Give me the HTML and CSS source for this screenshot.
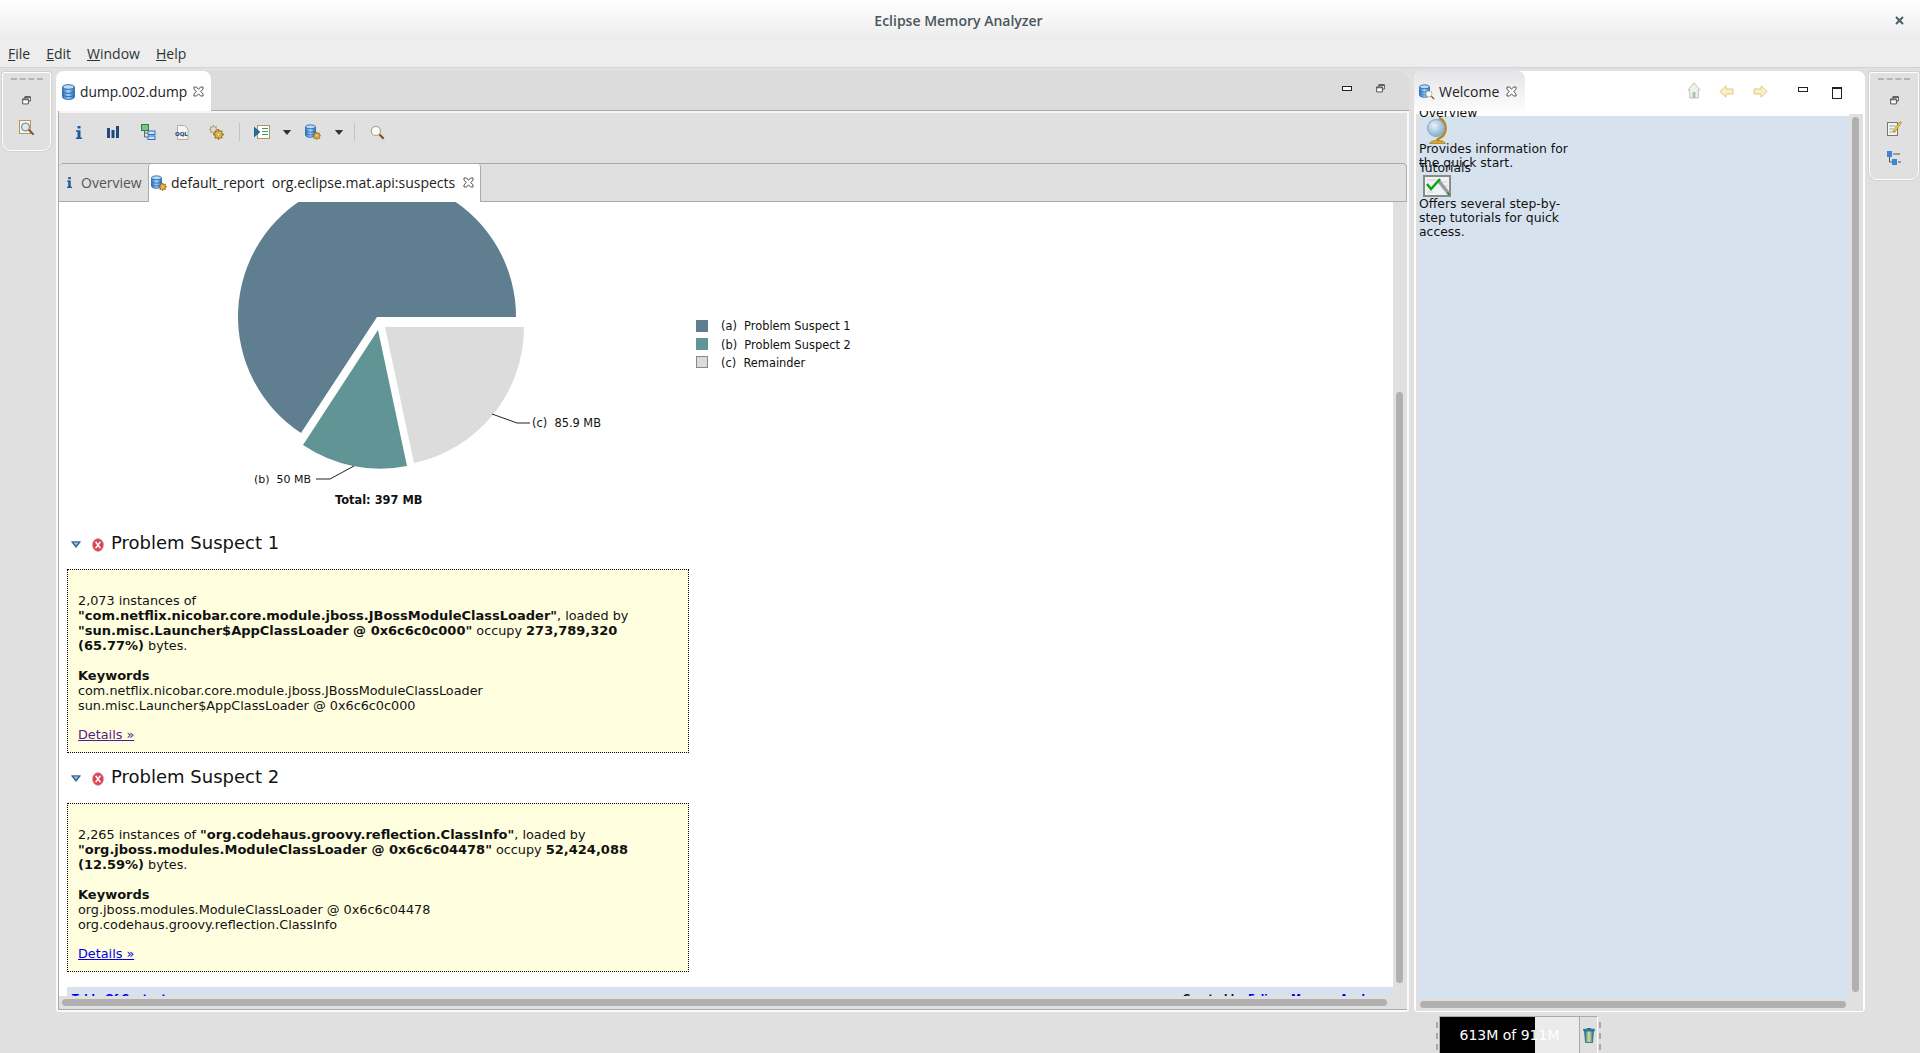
FILE: index.html
```html
<!DOCTYPE html>
<html lang="en">
<head>
  <meta charset="UTF-8">
  <title>Eclipse Memory Analyzer</title>
  <link rel="stylesheet" href="styles.css">
</head>
<body>

<svg class="defs" width="0" height="0">
  <defs>
    <linearGradient id="dbBlue" x1="0" x2="1" y1="0" y2="0">
      <stop offset="0" stop-color="#2f7fd0"/>
      <stop offset="0.5" stop-color="#a9d0f0"/>
      <stop offset="1" stop-color="#2a70c0"/>
    </linearGradient>
    <linearGradient id="trashFill" x1="0" x2="1" y1="0" y2="0">
      <stop offset="0" stop-color="#1f6d9c"/>
      <stop offset="0.5" stop-color="#dfe08a"/>
      <stop offset="1" stop-color="#1f6d9c"/>
    </linearGradient>
    <radialGradient id="globeFill" cx="0.4" cy="0.35" r="0.7">
      <stop offset="0" stop-color="#e8f2fa"/>
      <stop offset="1" stop-color="#7fa9cf"/>
    </radialGradient>
    <symbol id="close" viewBox="0 0 11 11">
      <path d="M1 1h2.500l2 2.300 2-2.300H10v2.300L7.600 5.500 10 7.800V10H7.500l-2-2.200-2 2.200H1V7.800l2.400-2.300L1 3.300z" fill="#fff" stroke="#555" stroke-width="1"/>
    </symbol>
    <symbol id="db" viewBox="0 0 13 16">
      <path d="M.7 3v10c0 1.400 2.600 2.400 5.800 2.400s5.800-1 5.800-2.400V3z" fill="url(#dbBlue)" stroke="#2467ad"/>
      <ellipse cx="6.500" cy="3" rx="5.800" ry="2.300" fill="#bcdcf5" stroke="#2467ad"/>
      <path d="M.7 7c0 1.400 2.600 2.400 5.800 2.400s5.800-1 5.800-2.400M.7 10.200c0 1.400 2.600 2.400 5.800 2.400s5.800-1 5.800-2.400" fill="none" stroke="#2467ad"/>
    </symbol>
    <symbol id="gear" viewBox="0 0 10 10">
      <circle cx="5" cy="5" r="3.400" fill="#eebd45" stroke="#9a7424" stroke-width="1"/>
      <path d="M5 0v2M5 8v2M0 5h2M8 5h2M1.500 1.500l1.300 1.300M7.200 7.200l1.300 1.300M1.500 8.500l1.300-1.300M7.200 2.800l1.300-1.300" stroke="#9a7424" stroke-width="1.200"/>
      <circle cx="5" cy="5" r="1.300" fill="#fff6d0" stroke="#9a7424" stroke-width=".6"/>
    </symbol>
    <symbol id="gearPale" viewBox="0 0 10 10">
      <circle cx="5" cy="5" r="3.400" fill="#e6dcc4" stroke="#a99a78" stroke-width="1"/>
      <path d="M5 0v2M5 8v2M0 5h2M8 5h2M1.500 1.500l1.300 1.300M7.200 7.200l1.300 1.300M1.500 8.500l1.300-1.300M7.200 2.800l1.300-1.300" stroke="#a99a78" stroke-width="1.200"/>
    </symbol>
    <symbol id="restore" viewBox="0 0 11 11">
      <path d="M3.500 3V.8h6.700v5.400H8M.8 3.500h7v6.200H.8z" fill="#fff" stroke="#333"/>
      <path d="M3.500 1.700h6.700M.8 4.600h7" stroke="#333"/>
    </symbol>
    <symbol id="err" viewBox="0 0 12 14">
      <ellipse cx="6" cy="7" rx="5.600" ry="6.400" fill="#e0404f" stroke="#c9b4b4" stroke-width=".6"/>
      <path d="M3.600 3.800l4.800 6.400M8.400 3.800l-4.800 6.400" stroke="#fff" stroke-width="1.500"/>
    </symbol>
    <symbol id="twistie" viewBox="0 0 10 7">
      <path d="M.5.7h9L5 6.500z" fill="#2c6aa5" stroke="#1d3f66" stroke-width=".6"/>
      <path d="M2.500 1.600h5L5 4.600z" fill="#9cc3e6"/>
    </symbol>
    <symbol id="caret" viewBox="0 0 10 6">
      <path d="M0 0h10L5 6z" fill="#333"/>
    </symbol>
    <symbol id="lens" viewBox="0 0 16 16">
      <path d="M9.600 9.600l5 5" stroke="#7a4b2a" stroke-width="2.200"/>
      <circle cx="6.300" cy="6.300" r="4.900" fill="#fbfbf2" stroke="#a8a699" stroke-width="1.300"/>
    </symbol>
  </defs>
</svg>

<div class="titlebar">
  <span class="title">Eclipse Memory Analyzer</span>
  <svg class="win-close" width="9" height="9" viewBox="0 0 9 9"><path d="M1 1l7 7M8 1L1 8" stroke="#4f5f66" stroke-width="2"/></svg>
</div>

<div class="menubar">
  <span class="menu"><u>F</u>ile</span>
  <span class="menu"><u>E</u>dit</span>
  <span class="menu"><u>W</u>indow</span>
  <span class="menu"><u>H</u>elp</span>
</div>

<div class="workbench">

  <!-- left trim -->
  <div class="trim trim-left">
    <div class="grip"></div>
    <svg class="trim-icon" width="9" height="9"><use href="#restore"/></svg>
    <svg class="trim-icon" width="16" height="16" viewBox="0 0 16 16">
      <rect x=".5" y=".5" width="11" height="13" fill="#f4f4f0" stroke="#b09a60"/>
      <path d="M9.600 9.600l5 5" stroke="#7a4b2a" stroke-width="2"/>
      <circle cx="6.500" cy="7" r="4" fill="#dbe8f2" stroke="#777"/>
    </svg>
  </div>

  <!-- editor stack -->
  <div class="editor-stack">
    <div class="stack-head">
      <div class="main-tab">
        <svg width="13" height="16"><use href="#db"/></svg>
        <span>dump.002.dump</span>
        <svg class="tab-close" width="11" height="11"><use href="#close"/></svg>
      </div>
      <div class="stack-buttons">
        <span class="btn-min"></span>
        <svg width="9" height="9"><use href="#restore"/></svg>
      </div>
    </div>

    <div class="editor-body">
      <div class="toolbar">
        <svg class="tool tool-info" width="6" height="13" viewBox="0 0 6 13"><path d="M1.500 0h3v2.600h-3zM0 4.200h4.500v7.300H6V13H0v-1.500h1.500V5.700H0z" fill="#1f5a9c"/></svg>
        <svg class="tool tool-bars" width="12" height="12" viewBox="0 0 12 12"><path d="M0 2h3v10H0zM4.500 4h3v8h-3zM9 0h3v12H9z" fill="#1f4a80"/></svg>
        <svg class="tool tool-tree" width="15" height="16" viewBox="0 0 15 16">
          <rect x=".5" y=".5" width="7" height="6" fill="#7cc47c" stroke="#2e7d4f"/>
          <path d="M3.500 6.500v6.500h3M3.500 9h3" fill="none" stroke="#666"/>
          <rect x="7" y="7" width="7" height="3.500" fill="#cfe2f5" stroke="#2a70c0"/>
          <rect x="7" y="12" width="7" height="3.500" fill="#cfe2f5" stroke="#2a70c0"/>
        </svg>
        <svg class="tool tool-oql" width="14" height="15" viewBox="0 0 14 15">
          <path d="M2.500.5h7l3.500 3.500v10.500h-10.500z" fill="#f4f4f0" stroke="#b7b09a"/>
          <text x="0" y="11" class="oql-text">OQL</text>
        </svg>
        <svg class="tool tool-gears" width="15" height="15" viewBox="0 0 15 15">
          <use href="#gearPale" x="0" y="0" width="9" height="9"/>
          <use href="#gear" x="4" y="4" width="11" height="11"/>
        </svg>
        <span class="tool-sep sep-a"></span>
        <svg class="tool tool-run" width="16" height="14" viewBox="0 0 16 14">
          <rect x="3.500" y=".5" width="12" height="13" fill="#fff" stroke="#a89a60"/>
          <path d="M8 3.500h6M8 6.500h6M8 9.500h6" stroke="#3e9a6a"/>
          <path d="M0 2l6 5-6 5z" fill="#1f6fa8" stroke="#123f66" stroke-width=".5"/>
        </svg>
        <svg class="tool-caret caret-a" width="10" height="5"><use href="#caret"/></svg>
        <svg class="tool tool-dbrun" width="16" height="16" viewBox="0 0 16 16">
          <use href="#db" x="0" y="0" width="11" height="14"/>
          <use href="#gear" x="7.500" y="7.500" width="8.500" height="8.500"/>
        </svg>
        <svg class="tool-caret caret-b" width="10" height="5"><use href="#caret"/></svg>
        <span class="tool-sep sep-b"></span>
        <svg class="tool tool-find" width="15" height="15"><use href="#lens"/></svg>
      </div>

      <div class="inner-tabs">
        <div class="inner-tab">
          <svg width="5" height="11" viewBox="0 0 6 13"><path d="M1.500 0h3v2.600h-3zM0 4.200h4.500v7.300H6V13H0v-1.500h1.500V5.700H0z" fill="#1f5a9c"/></svg>
          <span>Overview</span>
        </div>
        <div class="inner-tab inner-active">
          <svg width="16" height="16" viewBox="0 0 16 16">
            <use href="#db" x="0" y="0" width="11" height="14"/>
            <use href="#gear" x="7.500" y="7.500" width="8.500" height="8.500"/>
          </svg>
          <span>default_report&nbsp; org.eclipse.mat.api:suspects</span>
          <svg class="tab-close" width="11" height="11"><use href="#close"/></svg>
        </div>
      </div>

      <div class="report-pane">
        <div class="report-row">
          <div class="report">
            <svg class="chart" width="800" height="317" viewBox="59 202 800 317">
              <path d="M377 317L516 317A139 139 0 1 0 301 433Z" fill="#5f7f91"/>
              <path d="M378 330L303 445A138 138 0 0 0 407 466Z" fill="#619595"/>
              <path d="M385 327L524 327A139 139 0 0 1 414 463Z" fill="#dcdcdc"/>
              <path d="M492 414L517 423H530M354 466L330 479H316" fill="none" stroke="#222"/>
              <text x="532" y="427">(c)&#160; 85.9 MB</text>
              <text x="254" y="483" class="chart-small">(b)&#160; 50 MB</text>
              <text x="335" y="504" class="chart-total">Total: 397 MB</text>
              <rect x="696" y="320" width="12" height="12" fill="#5f7f91"/>
              <rect x="696" y="338" width="12" height="12" fill="#619595"/>
              <rect x="696.500" y="356.500" width="11" height="11" fill="#dcdcdc" stroke="#888"/>
              <text x="721" y="330">(a)&#160; Problem Suspect 1</text>
              <text x="721" y="349">(b)&#160; Problem Suspect 2</text>
              <text x="721" y="367">(c)&#160; Remainder</text>
            </svg>

            <h2 class="suspect-head">
              <svg class="twistie" width="10" height="7"><use href="#twistie"/></svg>
              <svg class="err" width="12" height="14"><use href="#err"/></svg>
              Problem Suspect 1
            </h2>
            <div class="suspect-box">
              <p>2,073 instances of <b>"com.netflix.nicobar.core.module.jboss.JBossModuleClassLoader"</b>, loaded by <b>"sun.misc.Launcher$AppClassLoader @ 0x6c6c0c000"</b> occupy <b>273,789,320 (65.77%)</b> bytes.</p>
              <p class="keywords"><b>Keywords</b><br>com.netflix.nicobar.core.module.jboss.JBossModuleClassLoader<br>sun.misc.Launcher$AppClassLoader @ 0x6c6c0c000</p>
              <a class="details visited" href="#">Details »</a>
            </div>

            <h2 class="suspect-head">
              <svg class="twistie" width="10" height="7"><use href="#twistie"/></svg>
              <svg class="err" width="12" height="14"><use href="#err"/></svg>
              Problem Suspect 2
            </h2>
            <div class="suspect-box">
              <p>2,265 instances of <b>"org.codehaus.groovy.reflection.ClassInfo"</b>, loaded by <b>"org.jboss.modules.ModuleClassLoader @ 0x6c6c04478"</b> occupy <b>52,424,088 (12.59%)</b> bytes.</p>
              <p class="keywords"><b>Keywords</b><br>org.jboss.modules.ModuleClassLoader @ 0x6c6c04478<br>org.codehaus.groovy.reflection.ClassInfo</p>
              <a class="details" href="#">Details »</a>
            </div>

            <div class="report-foot">
              <a href="#">Table Of Contents</a>
              <span>Created by <a href="#">Eclipse Memory Analyzer</a></span>
            </div>
          </div>
          <div class="vtrack report-vtrack"><div class="vthumb"></div></div>
        </div>
        <div class="htrack"><div class="hthumb"></div></div>
      </div>
    </div>
  </div>

  <!-- welcome view -->
  <div class="welcome-stack">
    <div class="welcome-head">
      <div class="welcome-tab">
        <svg width="16" height="16" viewBox="0 0 16 16">
          <use href="#db" x="0" y="0" width="11" height="14"/>
          <use href="#lens" x="6" y="6" width="10" height="10"/>
        </svg>
        <span>Welcome</span>
        <svg class="tab-close" width="11" height="11"><use href="#close"/></svg>
      </div>
      <div class="welcome-tools">
        <svg class="wt-home" width="14" height="17" viewBox="0 0 14 17">
          <path d="M7 .8L13 8h-1.700v8H2.700V8H1z" fill="#eef2f4" stroke="#c7c2ae"/>
          <path d="M5.500 10h3v6h-3z" fill="#a9c8a0"/>
        </svg>
        <svg class="wt-back" width="15" height="13" viewBox="0 0 15 13"><path d="M7 .8L.8 6.500 7 12.200V9h7V4H7z" fill="#fbeec2" stroke="#dfc98a"/></svg>
        <svg class="wt-next" width="15" height="13" viewBox="0 0 15 13"><path d="M8 .8l6.200 5.700L8 12.200V9H1V4h7z" fill="#fbeec2" stroke="#dfc98a"/></svg>
        <span class="btn-min wt-min"></span>
        <span class="btn-max"></span>
      </div>
    </div>
    <div class="welcome-body">
      <div class="welcome-view">
        <div class="welcome-item">
          <div class="item-title">Overview</div>
          <svg class="item-icon globe" width="20" height="27" viewBox="0 0 20 27">
            <path d="M12 1c5 2 7 7 6.500 12-.5 4-3 7-7 8.500" fill="none" stroke="#b88a1e" stroke-width="2.500"/>
            <circle cx="9" cy="11" r="8.500" fill="url(#globeFill)" stroke="#8aa5bd"/>
            <path d="M11 21v3" stroke="#b88a1e" stroke-width="3"/>
            <path d="M2.500 26.500c1-2.500 4-3 8-3s7 .5 8 3z" fill="#d8a92e" stroke="#96701a" stroke-width=".6"/>
          </svg>
          <div class="item-desc">Provides information for the quick start.</div>
        </div>
        <div class="welcome-item">
          <div class="item-title">Tutorials</div>
          <svg class="item-icon check" width="28" height="22" viewBox="0 0 28 22">
            <rect x="1" y="1" width="26" height="20" fill="#eef3f4" stroke="#8a8a8a" stroke-width="2"/>
            <path d="M4 5h9M4 17h6M14 7h10M21 11h4" stroke="#c6d6e0"/>
            <path d="M15 5l11 14" stroke="#9a9ea3" stroke-width="3.500"/>
            <path d="M24.500 17.500l2 2.500" stroke="#2a8a3a" stroke-width="2"/>
            <path d="M4 9l4 5 9-10" fill="none" stroke="#16a016" stroke-width="2.500"/>
          </svg>
          <div class="item-desc">Offers several step-by-step tutorials for quick access.</div>
        </div>
      </div>
      <div class="vtrack welcome-vtrack"><div class="vthumb"></div></div>
    </div>
    <div class="htrack welcome-htrack"><div class="hthumb"></div></div>
  </div>

  <!-- right trim -->
  <div class="trim trim-right">
    <div class="grip"></div>
    <svg class="trim-icon" width="9" height="9"><use href="#restore"/></svg>
    <svg class="trim-icon" width="15" height="16" viewBox="0 0 15 16">
      <rect x=".5" y="2.500" width="10" height="13" fill="#f4f4ee" stroke="#777"/>
      <path d="M2.500 6h6M2.500 9h4M2.500 12h6" stroke="#999"/>
      <path d="M6 11l7-9.500 1.500 1L8 12z" fill="#f2d22e" stroke="#8a7420" stroke-width=".6"/>
    </svg>
    <svg class="trim-icon" width="14" height="15" viewBox="0 0 14 15">
      <rect x="0" y="0" width="5" height="6" fill="#3a86d8"/>
      <rect x="5" y="8" width="5" height="6" fill="#3a86d8"/>
      <path d="M2.500 6v5H5M6 3h7M11 11h3" fill="none" stroke="#555"/>
    </svg>
  </div>
</div>

<div class="statusbar">
  <span class="heap-grip"></span>
  <div class="heap">
    <div class="heap-gauge">
      <div class="heap-used"></div>
      <span class="heap-text">613M of 911M</span>
    </div>
    <div class="heap-gc">
      <svg width="12" height="16" viewBox="0 0 12 16">
        <path d="M4 1h4v1.500H4z" fill="#1f6d8c"/>
        <path d="M.5 2h11v2H.5z" fill="#2a86a8" stroke="#1f6d8c" stroke-width=".5"/>
        <path d="M1.500 4h9l-1 11.500h-7z" fill="url(#trashFill)" stroke="#1f6d8c" stroke-width=".8"/>
      </svg>
    </div>
  </div>
  <span class="heap-grip"></span>
</div>

</body>
</html>
```

FILE: styles.css
```css
* {
  box-sizing: border-box;
}

html, body {
  margin: 0;
  padding: 0;
  height: 100%;
}

body {
  width: 1920px;
  height: 1053px;
  overflow: hidden;
  display: flex;
  flex-direction: column;
  background: #e0e0e0;
  font-family: "Open Sans", sans-serif;
  font-size: 13px;
  color: #2e3436;
}

.defs {
  position: absolute;
}

/* window frame */

.titlebar {
  height: 40px;
  flex: none;
  position: relative;
  display: flex;
  align-items: center;
  justify-content: center;
  background: linear-gradient(#ffffff, #ececec);
}

.title {
  font-weight: 600;
  font-size: 14px;
  color: #4a565b;
  margin-left: -3px;
}

.win-close {
  position: absolute;
  right: 16px;
  top: 16px;
}

.menubar {
  height: 28px;
  flex: none;
  display: flex;
  align-items: center;
  padding: 0 0 0 8px;
  gap: 16px;
  background: #ededed;
  border-bottom: 1px solid #d4d4d4;
  font-size: 14px;
}

.workbench {
  height: 948px;
  flex: none;
  display: flex;
  align-items: flex-start;
  padding: 3px 0 0 2px;
}

/* trims */

.trim {
  width: 49px;
  margin-top: 1px;
  display: flex;
  flex-direction: column;
  align-items: center;
  background: #e0e0e0;
  border: 1px solid #fff;
  border-radius: 2px 2px 8px 8px;
  box-shadow: 0 0 0 1px #d2d2d2;
}

.trim-left {
  height: 79px;
  gap: 15px;
}

.trim-right {
  width: 50px;
  height: 108px;
  margin-left: 4px;
  gap: 15px;
}

.grip {
  width: 32px;
  margin-top: 5px;
  margin-bottom: 1px;
  border-top: 2px dashed #b4b4b4;
}

/* editor stack */

.editor-stack {
  width: 1353px;
  height: 941px;
  margin-left: 5px;
  display: flex;
  flex-direction: column;
  border: 2px solid #fafafa;
  border-top: 0;
  border-radius: 8px 8px 3px 3px;
  background: #e0e0e0;
}

.stack-head {
  height: 40px;
  flex: none;
  display: flex;
  justify-content: space-between;
  background: #dcdcdc;
  border-bottom: 1px solid #aaa;
  border-radius: 8px 8px 0 0;
  margin: 0 -2px;
}

.main-tab {
  width: 155px;
  height: 40px;
  display: flex;
  align-items: center;
  padding: 1px 0 0 6px;
  gap: 5px;
  background: #fff;
  border-radius: 8px 8px 0 0;
  font-size: 13.8px;
  color: #222;
}

.tab-close {
  flex: none;
  margin-left: 1px;
}

.stack-buttons {
  display: flex;
  align-items: center;
  gap: 24px;
  padding: 0 24px 4px 0;
}

.btn-min {
  display: block;
  width: 10px;
  height: 5px;
  border: 1px solid #222;
  background: #fff;
}

.btn-max {
  display: block;
  width: 10px;
  height: 12px;
  border: 1px solid #222;
  border-top-width: 2px;
  background: #fff;
}

.editor-body {
  flex: 1;
  display: flex;
  flex-direction: column;
  padding-top: 2px;
  background: #f6f6f6;
  border-left: 1px solid #aaa;
}

.toolbar {
  height: 50px;
  flex: none;
  display: flex;
  align-items: center;
  padding-bottom: 12px;
  background: #e0e0e0;
}

.tool {
  flex: none;
}

.tool-info { margin-left: 17px; }
.tool-bars { margin-left: 25px; }
.tool-tree { margin-left: 22px; }
.tool-oql { margin-left: 19px; }
.tool-gears { margin-left: 20px; }
.sep-a { margin-left: 15px; }
.tool-run { margin-left: 14px; }
.caret-a { margin-left: 12px; }
.tool-dbrun { margin-left: 13px; }
.caret-b { margin-left: 13px; }
.sep-b { margin-left: 10px; }
.tool-find { margin-left: 15px; }

.tool-sep {
  width: 1px;
  height: 18px;
  background: #c4c4c4;
}

.oql-text {
  font-family: "DejaVu Sans", sans-serif;
  font-size: 5.5px;
  font-weight: bold;
  fill: #223a7a;
}

.inner-tabs {
  height: 39px;
  flex: none;
  display: flex;
  align-items: stretch;
  background: #e0e0e0;
  border-top: 1px solid #aaa;
  border-bottom: 1px solid #aaa;
  border-right: 1px solid #aaa;
  border-radius: 4px 4px 0 0;
}

.inner-tab {
  width: 89px;
  display: flex;
  align-items: center;
  padding-bottom: 1px;
  padding-left: 8px;
  gap: 9px;
  color: #555;
  font-size: 14px;
}

.inner-active {
  width: 333px;
  padding-left: 2px;
  gap: 4px;
  margin-bottom: -1px;
  background: #fff;
  color: #222;
  border-left: 1px solid #aaa;
  border-right: 1px solid #aaa;
  border-radius: 3px 3px 0 0;
}

.inner-active .tab-close {
  margin-left: 4px;
}

/* report */

.report-pane {
  flex: 1;
  min-height: 0;
  display: flex;
  flex-direction: column;
  background: #e0e0e0;
  border-bottom: 1px solid #aaa;
}

.report-row {
  height: 794px;
  flex: none;
  display: flex;
}

.report {
  width: 1334px;
  height: 794px;
  flex: none;
  overflow: hidden;
  background: #fff;
  font-family: "DejaVu Sans", sans-serif;
  font-size: 12.8px;
  line-height: 15px;
  color: #111;
}

.report b {
  font-size: 13px;
}

.chart {
  display: block;
  font-size: 11.4px;
  fill: #111;
}

.chart-total {
  font-weight: bold;
}

.chart-small {
  font-size: 11px;
}

.suspect-head {
  height: 50px;
  margin: 0 0 0 12px;
  padding-top: 14px;
  display: flex;
  align-items: flex-start;
  font-size: 18px;
  line-height: 20px;
  font-weight: normal;
  color: #111;
}

.twistie {
  margin-top: 8px;
}

.err {
  margin: 5px 7px 0 11px;
}

.suspect-box {
  width: 622px;
  margin-left: 8px;
  padding: 23px 52px 10px 10px;
  background: #ffffe0;
  border: 1px dotted #000;
}

.suspect-box p {
  margin: 0 0 15px;
}

.suspect-box .keywords {
  margin-bottom: 14px;
}

.details {
  display: block;
  color: #0000ee;
}

.details.visited {
  color: #551a8b;
}

.report-foot {
  display: flex;
  justify-content: space-between;
  margin: 15px 0 0 8px;
  padding: 6px 4px 0 5px;
  height: 30px;
  background: #d6e3ef;
  font-size: 10px;
  line-height: 12px;
  font-weight: bold;
}

.report-foot a {
  color: #0000ee;
  text-decoration: none;
}

/* scrollbars */

.vtrack {
  width: 12px;
  flex: none;
  background: #e0e0e0;
}

.vthumb {
  width: 7px;
  margin-left: 3px;
  border-radius: 4px;
  background: #b0b0b0;
}

.report-vtrack .vthumb {
  height: 591px;
  margin-top: 190px;
}

.htrack {
  height: 13px;
  flex: none;
  padding: 3px 20px 0 3px;
  background: #e0e0e0;
}

.hthumb {
  height: 7px;
  border-radius: 4px;
  background: #b0b0b0;
}

/* welcome view */

.welcome-stack {
  width: 451px;
  height: 941px;
  margin-left: 5px;
  display: flex;
  flex-direction: column;
  background: #e0e0e0;
  border: 2px solid #fff;
  border-top: 0;
  border-radius: 8px 8px 4px 4px;
}

.welcome-head {
  height: 40px;
  flex: none;
  display: flex;
  justify-content: space-between;
  background: #fff;
  margin: 0 -2px;
  border-radius: 8px 8px 0 0;
}

.welcome-tab {
  width: 111px;
  display: flex;
  align-items: center;
  padding: 1px 0 0 5px;
  gap: 4px;
  background: linear-gradient(#e4e4e8, #fdfdfd);
  border-radius: 8px 8px 0 0;
  font-size: 14px;
  color: #222;
}

.welcome-tab .tab-close {
  margin-left: 3px;
}

.welcome-tools {
  display: flex;
  align-items: flex-start;
  padding: 11px 23px 0 0;
}

.wt-back { margin-left: 18px; margin-top: 3px; }
.wt-next { margin-left: 19px; margin-top: 3px; }
.wt-min { margin: 5px 0 0 30px; }
.btn-max { margin: 5px 0 0 24px; }

.welcome-body {
  height: 887px;
  flex: none;
  display: flex;
  padding-left: 3px;
  background: linear-gradient(#fff 3px, #e0e0e0 3px);
}

.welcome-view {
  width: 432px;
  overflow: hidden;
  background: linear-gradient(#fff 5px, #d6e3ef 5px);
  font-family: "DejaVu Sans", sans-serif;
  font-size: 12.4px;
  line-height: 14px;
  color: #111;
}

.welcome-item {
  width: 155px;
  height: 55px;
}

.welcome-item:first-child {
  margin-top: -5px;
}

.item-title {
  height: 14px;
}

.item-icon {
  display: block;
}

.globe {
  margin: -3px 0 -2px 8px;
}

.check {
  margin-left: 4px;
}

.welcome-vtrack {
  width: 14px;
  background: transparent;
}

.welcome-vtrack .vthumb {
  height: 875px;
  margin-top: 6px;
}

.welcome-htrack {
  height: 13px;
  padding: 3px 17px 0 4px;
}

/* status line */

.statusbar {
  flex: 1;
  display: flex;
  padding-left: 1436px;
}

.heap-grip {
  width: 2px;
  margin: 6px 1px 3px;
  border-left: 2px dashed #a8a8a0;
}

.heap-grip:first-child {
  margin: 6px 1px 3px 0;
}

.heap {
  width: 159px;
  height: 37px;
  display: flex;
  border-top: 1px solid #aaa;
  border-right: 1px solid #fff;
}

.heap-gauge {
  width: 141px;
  position: relative;
  background: #ebebeb;
  border-right: 1px solid #aaa;
  border-left: 1px solid #aaa;
  display: flex;
  align-items: center;
  justify-content: center;
}

.heap-used {
  position: absolute;
  left: 0;
  top: 0;
  bottom: 0;
  width: 95px;
  background: #000;
}

.heap-text {
  position: relative;
  font-family: "DejaVu Sans", sans-serif;
  font-size: 14px;
  color: #fff;
}

.heap-gc {
  flex: 1;
  display: flex;
  align-items: center;
  justify-content: center;
}
```
